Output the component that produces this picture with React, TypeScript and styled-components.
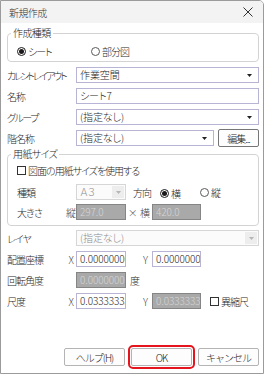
import styled, { createGlobalStyle } from 'styled-components';

const GlobalStyle = createGlobalStyle`
  html, body {
    margin: 0;
    padding: 0;
    background: #ffffff;
  }
  body {
    font-family: "Noto Sans CJK JP", "Noto Sans", sans-serif;
    font-size: 10px;
    font-weight: 300;
    color: #1e1e1e;
    letter-spacing: -1px;
    font-feature-settings: "palt";
  }
  * {
    box-sizing: border-box;
  }
`;

const Window = styled.div`
  width: 264px;
  height: 374px;
  border: 1px solid #9b9b9b;
  border-top-right-radius: 5px;
  background: #ffffff;
  display: flex;
  flex-direction: column;
  overflow: hidden;
`;

const TitleBar = styled.div`
  height: 22px;
  flex: none;
  background: #f3f3f3;
  display: flex;
  align-items: center;
  justify-content: space-between;
  padding: 0 10px 0 8px;
`;

const Title = styled.span`
  color: #333333;
  letter-spacing: -0.6px;
`;

const Body = styled.div`
  flex: 1;
  display: flex;
  flex-direction: column;
  padding: 0 4px 7px 6px;
`;

const Group = styled.fieldset<{ $top: number }>`
  margin: ${({ $top }) => $top}px 0 0;
  padding: 0 0 0 3px;
  border: 1px solid #d3d3d3;
  border-radius: 4px;
  min-width: 0;
`;

const Legend = styled.legend`
  padding: 0 2px;
  line-height: 14px;
  letter-spacing: -0.6px;
`;

const GroupBody = styled.div<{ $pad: string }>`
  padding: ${({ $pad }) => $pad};
`;

const OptionRow = styled.div`
  display: flex;
  align-items: center;
  height: 12px;
`;

const Option = styled.span<{ $w?: number }>`
  display: inline-flex;
  align-items: center;
  gap: 2px;
  width: ${({ $w }) => ($w ? `${$w}px` : 'auto')};
  flex: none;
  white-space: nowrap;
`;

const RadioCircle = styled.span<{ $checked?: boolean }>`
  width: 9px;
  height: 9px;
  border-radius: 50%;
  border: 1px solid ${({ $checked }) => ($checked ? '#1a1a1a' : '#5a5a5a')};
  display: inline-flex;
  align-items: center;
  justify-content: center;
  flex: none;

  &::after {
    content: '';
    width: 5px;
    height: 5px;
    border-radius: 50%;
    background: ${({ $checked }) => ($checked ? '#1a1a1a' : 'transparent')};
  }
`;

const CheckBox = styled.span`
  width: 9px;
  height: 9px;
  border: 1px solid #333333;
  flex: none;
`;

const Row = styled.div<{ $mt?: number }>`
  display: flex;
  align-items: center;
  height: 16px;
  margin-top: ${({ $mt }) => $mt ?? 5}px;
`;

const Label = styled.span<{ $w: number; $ls?: number }>`
  width: ${({ $w }) => $w}px;
  flex: none;
  white-space: nowrap;
  letter-spacing: ${({ $ls }) => $ls ?? -1}px;
`;

const Prefix = styled.span<{ $w: number; $pr?: number }>`
  width: ${({ $w }) => $w}px;
  flex: none;
  text-align: right;
  padding-right: ${({ $pr }) => $pr ?? 2}px;
  color: #444444;
  letter-spacing: 0;
`;

const Note = styled.span<{ $ml: number }>`
  margin-left: ${({ $ml }) => $ml}px;
  flex: none;
  white-space: nowrap;
`;

type Variant = 'edit' | 'grey' | 'select' | 'off';

const fieldColors: Record<Variant, { border: string; bg: string; fg: string }> = {
  edit: { border: '#b7b4d6', bg: '#ffffff', fg: '#1e1e1e' },
  grey: { border: '#858585', bg: '#a9a9a9', fg: '#d6d6d6' },
  select: { border: '#b7b4d6', bg: '#ffffff', fg: '#1e1e1e' },
  off: { border: '#d6d6d6', bg: '#fbfbfb', fg: '#8c8c8c' },
};

const Field = styled.div<{ $w?: number; $variant: Variant }>`
  width: ${({ $w }) => ($w ? `${$w}px` : 'auto')};
  flex: ${({ $w }) => ($w ? 'none' : '1')};
  height: 16px;
  display: flex;
  align-items: center;
  border: 1px solid ${({ $variant }) => fieldColors[$variant].border};
  background: ${({ $variant }) => fieldColors[$variant].bg};
  color: ${({ $variant }) => fieldColors[$variant].fg};
  padding-left: 3px;
  overflow: hidden;
`;

const FieldText = styled.span`
  flex: 1;
  min-width: 0;
  white-space: nowrap;
  overflow: hidden;
  line-height: 14px;
  letter-spacing: -0.1px;
`;

const ArrowBox = styled.span<{ $off?: boolean }>`
  width: 12px;
  height: 12px;
  margin-right: ${({ $off }) => ($off ? '1px' : '3px')};
  display: flex;
  align-items: center;
  justify-content: center;
  background: ${({ $off }) => ($off ? '#ededed' : 'transparent')};
  flex: none;
`;

const Button = styled.button<{ $w: number; $focus?: boolean; $dark?: boolean }>`
  width: ${({ $w }) => $w}px;
  height: 18px;
  flex: none;
  padding: 0;
  background: #fdfdfd;
  border: 1px solid ${({ $dark }) => ($dark ? '#767676' : '#b4b4b4')};
  border-radius: 2px;
  font-family: inherit;
  font-size: 10px;
  font-weight: 300;
  color: #1e1e1e;
  letter-spacing: -1px;
  outline: ${({ $focus }) => ($focus ? '2px solid #e5141d' : 'none')};
  outline-offset: 1px;
`;

const ButtonBar = styled.div`
  margin-top: auto;
  display: flex;
  justify-content: flex-end;
  gap: 6px;
`;

function Arrow({ off }: { off?: boolean }) {
  return (
    <ArrowBox $off={off}>
      <svg width="5" height="3" viewBox="0 0 5 3">
        <path d="M0 0H5L2.5 3Z" fill={off ? '#b5b5b5' : '#222222'} />
      </svg>
    </ArrowBox>
  );
}

function Select({ value, w, off }: { value: string; w?: number; off?: boolean }) {
  return (
    <Field $w={w} $variant={off ? 'off' : 'select'}>
      <FieldText>{value}</FieldText>
      <Arrow off={off} />
    </Field>
  );
}

function Edit({ value, w, grey }: { value: string; w?: number; grey?: boolean }) {
  return (
    <Field $w={w} $variant={grey ? 'grey' : 'edit'}>
      <FieldText>{value}</FieldText>
    </Field>
  );
}

function Radio({ label, checked, w }: { label: string; checked?: boolean; w?: number }) {
  return (
    <Option $w={w}>
      <RadioCircle $checked={checked} />
      {label}
    </Option>
  );
}

function Check({ label }: { label: string }) {
  return (
    <Option>
      <CheckBox />
      {label}
    </Option>
  );
}

function CloseIcon() {
  return (
    <svg width="10" height="10" viewBox="0 0 10 10">
      <path d="M0.5 0.5L9.5 9.5M9.5 0.5L0.5 9.5" stroke="#333333" strokeWidth="1" />
    </svg>
  );
}

export default function App() {
  return (
    <>
      <GlobalStyle />
      <Window>
        <TitleBar>
          <Title>新規作成</Title>
          <CloseIcon />
        </TitleBar>
        <Body>
          <Group $top={3}>
            <Legend>作成種類</Legend>
            <GroupBody $pad="5px 0 4px 6px">
              <OptionRow>
                <Radio label="シート" checked w={74} />
                <Radio label="部分図" />
              </OptionRow>
            </GroupBody>
          </Group>

          <Row>
            <Label $w={69} $ls={-2.2}>
              カレントレイアウト
            </Label>
            <Select value="作業空間" />
          </Row>
          <Row>
            <Label $w={69}>名称</Label>
            <Edit value="シート7" />
          </Row>
          <Row>
            <Label $w={69} $ls={-1.5}>
              グループ
            </Label>
            <Select value="(指定なし)" />
          </Row>
          <Row>
            <Label $w={69}>階名称</Label>
            <Select value="(指定なし)" w={138} />
            <Note $ml={4}>
              <Button $w={41} $dark>
                編集...
              </Button>
            </Note>
          </Row>

          <Group $top={1}>
            <Legend>用紙サイズ</Legend>
            <GroupBody $pad="3px 0 5px 6px">
              <OptionRow>
                <Check label="図面の用紙サイズを使用する" />
              </OptionRow>
              <Row $mt={8}>
                <Label $w={59}>種類</Label>
                <Select value="Ａ３" w={50} off />
                <Note $ml={7}>方向</Note>
                <Note $ml={9}>
                  <Radio label="横" checked w={40} />
                </Note>
                <Radio label="縦" />
              </Row>
              <Row $mt={4}>
                <Label $w={49}>大きさ</Label>
                <Prefix $w={10}>縦</Prefix>
                <Edit value="297.0" w={50} grey />
                <Prefix $w={26}>× 横</Prefix>
                <Edit value="420.0" w={49} grey />
              </Row>
            </GroupBody>
          </Group>

          <Row $mt={4}>
            <Label $w={69}>レイヤ</Label>
            <Select value="(指定なし)" off />
          </Row>
          <Row>
            <Label $w={60}>配置座標</Label>
            <Prefix $w={9}>X</Prefix>
            <Edit value="0.000000000" w={50} />
            <Prefix $w={26} $pr={4}>
              Y
            </Prefix>
            <Edit value="0.000000000" w={49} />
          </Row>
          <Row>
            <Label $w={69}>回転角度</Label>
            <Edit value="0.000000000" w={50} grey />
            <Note $ml={4}>度</Note>
          </Row>
          <Row>
            <Label $w={60}>尺度</Label>
            <Prefix $w={9}>X</Prefix>
            <Edit value="0.033333333" w={50} />
            <Prefix $w={26} $pr={4}>
              Y
            </Prefix>
            <Edit value="0.033333333" w={49} grey />
            <Note $ml={9}>
              <Check label="異縮尺" />
            </Note>
          </Row>

          <ButtonBar>
            <Button $w={61}>ヘルプ(H)</Button>
            <Button $w={61} $focus>
              OK
            </Button>
            <Button $w={61}>キャンセル</Button>
          </ButtonBar>
        </Body>
      </Window>
    </>
  );
}
